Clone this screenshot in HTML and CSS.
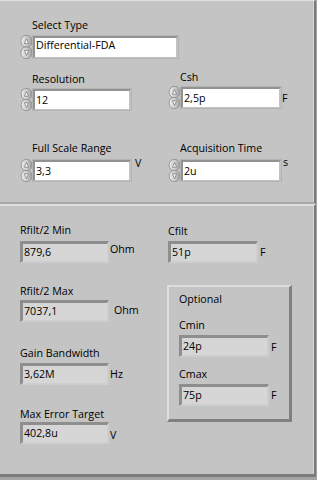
FILE: index.html
```html
<!DOCTYPE html>
<html>
<head>
<meta charset="utf-8">
<link rel="stylesheet" href="styles.css">
</head>
<body>
<svg width="0" height="0" class="defs">
  <defs>
    <linearGradient id="spg" x1="0" y1="0" x2="1" y2="0">
      <stop offset="0" stop-color="#ececec"/>
      <stop offset="0.5" stop-color="#cfcfcf"/>
      <stop offset="1" stop-color="#9e9e9e"/>
    </linearGradient>
    <symbol id="spin" viewBox="0 0 13 24">
      <rect x="1" y="0.5" width="11" height="11.5" rx="5" fill="url(#spg)" stroke="#8e8e8e" stroke-width="0.9"/>
      <rect x="1" y="12" width="11" height="11.5" rx="5" fill="url(#spg)" stroke="#8e8e8e" stroke-width="0.9"/>
      <path d="M4.3 8.6 L6.5 3.6 L8.7 8.6 Z" fill="#f6f6f6" stroke="#7a7a7a" stroke-width="0.8"/>
      <path d="M4.3 15.4 L6.5 20.4 L8.7 15.4 Z" fill="#f6f6f6" stroke="#7a7a7a" stroke-width="0.8"/>
    </symbol>
  </defs>
</svg>

<div class="panel top">
  <div class="ctl sel">
    <div class="lbl">Select Type</div>
    <div class="row r-sel">
      <svg class="spin s24"><use href="#spin"/></svg>
      <div class="ctrl ring w145">Differential-FDA</div>
    </div>
  </div>
  <div class="cols">
    <div class="col left">
      <div class="ctl res">
        <div class="lbl">Resolution</div>
        <div class="row">
          <svg class="spin"><use href="#spin"/></svg>
          <div class="ctrl w98">12</div>
        </div>
      </div>
      <div class="ctl fsr">
        <div class="lbl">Full Scale Range</div>
        <div class="row r-low">
          <svg class="spin"><use href="#spin"/></svg>
          <div class="ctrl w98">3,3</div>
          <span class="unit u-v">V</span>
        </div>
      </div>
    </div>
    <div class="col right">
      <div class="ctl csh">
        <div class="lbl">Csh</div>
        <div class="row">
          <svg class="spin"><use href="#spin"/></svg>
          <div class="ctrl w100">2,5p</div>
          <span class="unit u-f">F</span>
        </div>
      </div>
      <div class="ctl acq">
        <div class="lbl">Acquisition Time</div>
        <div class="row r-low">
          <svg class="spin"><use href="#spin"/></svg>
          <div class="ctrl w100">2u</div>
          <span class="unit u-s">s</span>
        </div>
      </div>
    </div>
  </div>
</div>

<div class="panel bottom">
  <div class="col left2">
    <div class="ind-ctl rmin">
      <div class="lbl">Rfilt/2 Min</div>
      <div class="row">
        <div class="ind w89">879,6</div>
        <span class="unit u-ohm1">Ohm</span>
      </div>
    </div>
    <div class="ind-ctl rmax">
      <div class="lbl">Rfilt/2 Max</div>
      <div class="row">
        <div class="ind w89">7037,1</div>
        <span class="unit u-ohm2">Ohm</span>
      </div>
    </div>
    <div class="ind-ctl gbw">
      <div class="lbl">Gain Bandwidth</div>
      <div class="row">
        <div class="ind w89">3,62M</div>
        <span class="unit u-hz">Hz</span>
      </div>
    </div>
    <div class="ind-ctl merr">
      <div class="lbl">Max Error Target</div>
      <div class="row">
        <div class="ind w89">402,8u</div>
        <span class="unit u-v2">V</span>
      </div>
    </div>
  </div>
  <div class="col right2">
    <div class="ind-ctl cfilt">
      <div class="lbl">Cfilt</div>
      <div class="row">
        <div class="ind w90">51p</div>
        <span class="unit u-f2">F</span>
      </div>
    </div>
    <div class="group">
      <div class="lbl">Optional</div>
      <div class="ind-ctl cmin">
        <div class="lbl">Cmin</div>
        <div class="row">
          <div class="ind w90">24p</div>
          <span class="unit u-f3">F</span>
        </div>
      </div>
      <div class="ind-ctl cmax">
        <div class="lbl">Cmax</div>
        <div class="row">
          <div class="ind w90">75p</div>
          <span class="unit u-f4">F</span>
        </div>
      </div>
    </div>
  </div>
</div>
</body>
</html>
```

FILE: styles.css
```css
html, body {
  margin: 0;
  padding: 0;
}
body {
  width: 317px;
  height: 480px;
  background: #a4a4a4;
  font-family: "Open Sans", "Noto Sans", sans-serif;
  font-size: 10.7px;
  color: #000;
  overflow: hidden;
}
.defs {
  position: absolute;
  width: 0;
  height: 0;
}
.panel {
  box-sizing: border-box;
  width: 316px;
  background: #c4c4c4;
  border-right: 2px solid #7a7a7a;
  box-shadow: inset -1px 0 0 #d6d6d6;
  padding-left: 20px;
}
.top {
  height: 204px;
  border-top: 1px solid #e0e0e0;
  border-bottom: 2px solid #a8a8a8;
}
.bottom {
  height: 273px;
  border-top: 2px solid #dedede;
  border-bottom: 3px solid #7c7c7c;
  display: flex;
}
.lbl {
  line-height: 13px;
  height: 13px;
  white-space: nowrap;
}
.ctl .lbl {
  padding-left: 12px;
}
.row {
  display: flex;
  align-items: center;
}
.spin {
  width: 13px;
  height: 23px;
  flex: none;
}
.spin.s24 {
  height: 24px;
}
.ctrl {
  box-sizing: border-box;
  height: 21px;
  background: #fff;
  border-style: solid;
  border-width: 2px 2px 1px 2px;
  border-color: #929292 #c2c2c2 #c2c2c2 #929292;
  box-shadow: 0 0 0 1px #b4b4b4;
  line-height: 18px;
  padding-left: 1px;
  white-space: nowrap;
  overflow: hidden;
}
.ctrl.ring {
  height: 22px;
  line-height: 14px;
}
.w145 { width: 145px; }
.w98 { width: 98px; }
.w100 { width: 100px; }
.w89 { width: 89px; }
.w90 { width: 90px; }

.sel { margin-top: 18px; }
.sel .row { margin-top: 3px; }
.cols {
  display: flex;
}
.col {
  display: flex;
  flex-direction: column;
}
.left { width: 148px; }
.res { margin-top: 14px; }
.res .row, .csh .row { margin-top: 2px; }
.fsr { margin-top: 31px; }
.r-low { margin-top: 4px; }
.csh { margin-top: 12px; }
.acq { margin-top: 33px; }

.unit {
  line-height: 13px;
  align-self: flex-start;
}
.u-f { margin: 6px 0 0 1px; }
.u-v { margin: -2px 0 0 4px; }
.u-s { margin: -3px 0 0 2px; }

/* indicators */
.ind {
  box-sizing: border-box;
  height: 22px;
  background: #d6d6d6;
  border-style: solid;
  border-width: 3px 2px 2px 3px;
  border-color: #8e8e8e #cecece #cecece #8e8e8e;
  line-height: 17px;
  padding-left: 1px;
  white-space: nowrap;
}
.row .ind { align-self: flex-start; }
.left2 { width: 148px; }
.rmin { margin-top: 18px; }
.rmin .row { margin-top: 4px; }
.rmax { margin-top: 22px; }
.rmax .row { margin-top: 2px; }
.gbw { margin-top: 25px; }
.gbw .row { margin-top: 3px; }
.merr { margin-top: 23px; }
.merr .row { margin-top: 1px; }
.u-ohm1 { margin: 2px 0 0 1px; }
.u-ohm2 { margin: 4px 0 0 5px; }
.u-hz { margin: 5px 0 0 1px; }
.u-v2 { margin: 7px 0 0 1px; }

.cfilt { margin-top: 19px; }
.cfilt .row { margin-top: 3px; }
.u-f2 { margin: 5px 0 0 2px; }

.group {
  box-sizing: border-box;
  width: 125px;
  margin: 22px 0 0 -1px;
  border-style: solid;
  border-width: 2px 3px 3px 2px;
  border-color: #dedede #808080 #808080 #dedede;
  padding: 6px 0 13px 10px;
  display: flex;
  flex-direction: column;
}
.cmin { margin-top: 13px; }
.cmin .row, .cmax .row { margin-top: 3px; }
.cmax { margin-top: 11px; }
.u-f3 { margin: 6px 0 0 2px; }
.u-f4 { margin: 5px 0 0 2px; }
```
